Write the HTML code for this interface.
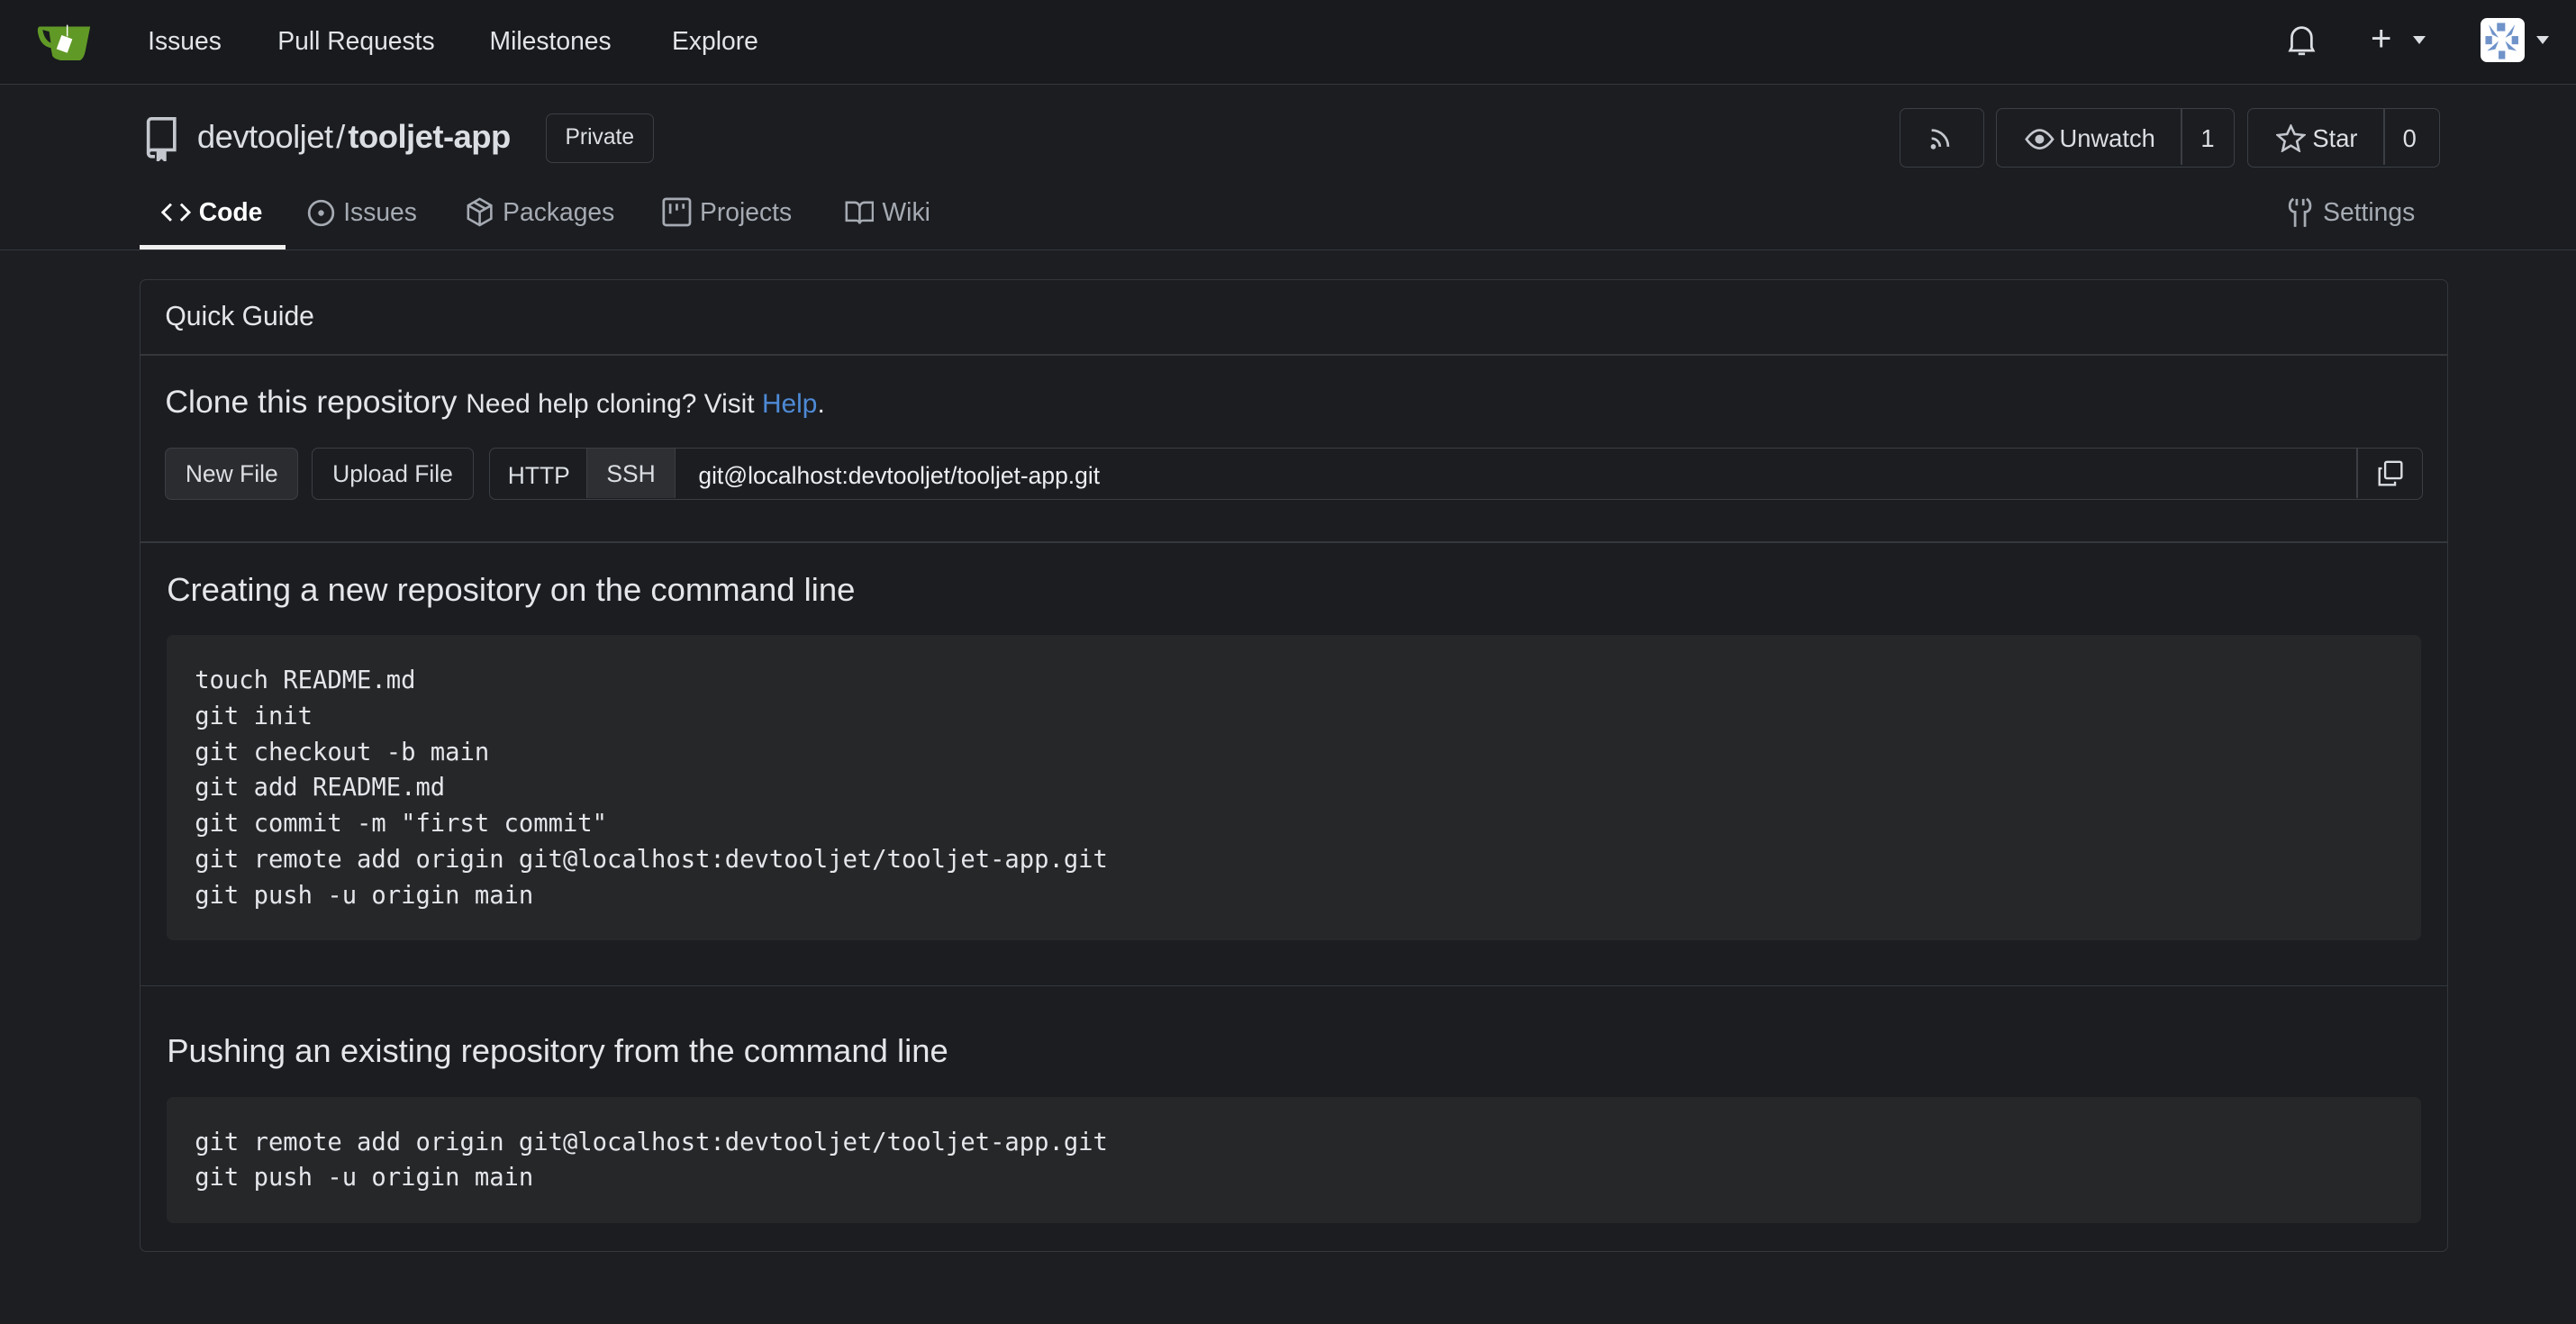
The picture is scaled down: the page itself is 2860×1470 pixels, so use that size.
<!DOCTYPE html>
<html><head><meta charset="utf-8">
<style>
html{zoom:1.824;}
body{margin:0;width:1568px;height:806px;background:#1c1e22;font-family:"Liberation Sans",sans-serif;color:#dbdee2;overflow:hidden;position:relative;font-size:15px}
.abs{position:absolute}
.nav{position:absolute;left:0;top:0;width:1568px;height:51px;background:#181a1e;border-bottom:1px solid #34373c}
.nav a{position:absolute;top:16px;font-size:15.5px;color:#e2e4e8}
.hdr{position:absolute;left:0;top:52px;width:1568px;height:100px;background:#1b1d21;border-bottom:1px solid #34373c}
.btn{position:absolute;border:1px solid #3b3e44;border-radius:4px;box-sizing:border-box;background:#1b1d21;color:#dbdee2}
.tab{position:absolute;top:120px;font-size:15.5px;color:#a6abb3}
.box{position:absolute;left:85px;top:170px;width:1405px;height:592px;border:1px solid #34373c;border-radius:4px;box-sizing:border-box;background:#1b1d21}
.code{position:absolute;left:16px;width:1372px;background:#262729;border-radius:4px;font-family:"DejaVu Sans Mono","Liberation Mono",monospace;font-size:14.9px;line-height:21.8px;color:#e4e6ea;padding:17px 17px;box-sizing:border-box;white-space:pre}
h3{position:absolute;margin:0;font-weight:normal;font-size:20px;color:#e4e6ea;left:16px}
.sep{position:absolute;left:0;width:100%;height:1px;background:#34373c}
</style></head><body>
<div class="nav">
 <svg class="abs" style="left:22px;top:13px" width="34" height="24" viewBox="0 0 34 24"><path d="M2 3 Q0 4 2 10 Q4 15 9 16 L10 21 Q12 24 20 24 L26 24 Q29 23 30 18 L33 3 Z" fill="#609926"/><path d="M4 5 Q5 11 9 13 L8 6 Z" fill="#181a1e"/><rect x="14" y="9" width="7" height="9" transform="rotate(20 17 13)" fill="#fff"/><line x1="19" y1="2" x2="19" y2="9" stroke="#fff" stroke-width="0.8"/></svg>
 <a style="left:90px">Issues</a><a style="left:169px">Pull Requests</a><a style="left:298px">Milestones</a><a style="left:409px">Explore</a>
 <svg class="abs" style="left:1392px;top:15px" width="18" height="20" viewBox="0 0 18 20" fill="none" stroke="#dbdee2" stroke-width="1.5"><path d="M3 14 V8 a6 6 0 0 1 12 0 V14 L16 16 H2 Z"/><path d="M7 18 h4"/></svg>
 <div class="abs" style="left:1443px;top:11px;font-size:22px;color:#dbdee2">+</div>
 <div class="abs" style="left:1469px;top:22px;border:4px solid transparent;border-top:5px solid #dbdee2"></div>
 <div class="abs" style="left:1510px;top:11px;width:27px;height:27px;background:#fff;border-radius:4px"><svg width="27" height="27" viewBox="0 0 27 27" fill="#6f92c9"><rect x="10" y="3" width="5" height="5"/><rect x="3" y="11" width="4" height="5"/><rect x="19" y="11" width="4" height="5"/><rect x="11" y="20" width="4" height="5"/><path d="M5 4 L11 12 L7 10Z M21 4 L15 12 L19 10Z M4 20 L11 14 L9 19Z M22 20 L15 14 L17 19Z"/></svg></div>
 <div class="abs" style="left:1544px;top:22px;border:4px solid transparent;border-top:5px solid #dbdee2"></div>
</div>
<div class="hdr"></div>
<svg class="abs" style="left:88px;top:71px" width="20" height="27" viewBox="0 0 20 27" fill="none" stroke="#c4c8ce" stroke-width="2"><path d="M2 22 V3 a2 2 0 0 1 2 -2 H18 V20 H4 a2 2 0 0 0 -2 2 a2 2 0 0 0 2 2 H6"/><path d="M8 20 V26 L10 24 L12 26 V20" fill="#c4c8ce"/></svg>
<div class="abs" style="left:120px;top:72px;font-size:20px;color:#dbdee2;letter-spacing:-0.3px">devtooljet<span style="margin:0 2px">/</span><b>tooljet-app</b></div>
<div class="btn" style="left:332px;top:69px;width:66px;height:30px;font-size:13.5px;text-align:center;line-height:28px">Private</div>
<div class="btn" style="left:1156px;top:66px;width:52px;height:36px"><svg style="margin:11px 0 0 17px" width="16" height="14" viewBox="0 0 16 14" fill="none" stroke="#c4c8ce" stroke-width="1.5"><circle cx="3" cy="12" r="0.8" fill="#c4c8ce"/><path d="M2 7 a5 5 0 0 1 5 5"/><path d="M2 2 a10 10 0 0 1 10 10"/></svg></div>
<div class="btn" style="left:1215px;top:66px;width:145px;height:36px;font-size:15px"><svg class="abs" style="left:17px;top:10px" width="18" height="16" viewBox="0 0 18 16" fill="none" stroke="#c4c8ce" stroke-width="1.5"><path d="M1 8 Q9 -3 17 8 Q9 19 1 8Z"/><circle cx="9" cy="8" r="2" fill="#c4c8ce"/></svg><span class="abs" style="left:38px;top:9px">Unwatch</span><div class="abs" style="left:112px;top:0;width:1px;height:34px;background:#3b3e44"></div><span class="abs" style="left:124px;top:9px">1</span></div>
<div class="btn" style="left:1368px;top:66px;width:117px;height:36px;font-size:15px"><svg class="abs" style="left:17px;top:9px" width="18" height="17" viewBox="0 0 18 17" fill="none" stroke="#c4c8ce" stroke-width="1.4"><path d="M9 1 L11.3 6 L17 6.6 L12.7 10.3 L14 16 L9 13 L4 16 L5.3 10.3 L1 6.6 L6.7 6Z"/></svg><span class="abs" style="left:39px;top:9px">Star</span><div class="abs" style="left:82px;top:0;width:1px;height:34px;background:#3b3e44"></div><span class="abs" style="left:94px;top:9px">0</span></div>
<svg class="abs" style="left:98px;top:122px" width="18" height="14" viewBox="0 0 18 14" fill="none" stroke="#fff" stroke-width="1.6"><path d="M6 2 L1 7 L6 12 M12 2 L17 7 L12 12"/></svg>
<div class="tab" style="left:121px;color:#fff;font-weight:bold">Code</div>
<div class="abs" style="left:85px;top:149px;width:89px;height:3px;background:#f0f0f0"></div>
<svg class="abs" style="left:187px;top:121px" width="17" height="17" viewBox="0 0 17 17" fill="none" stroke="#a6abb3" stroke-width="1.5"><circle cx="8.5" cy="8.5" r="7.3"/><circle cx="8.5" cy="8.5" r="1" fill="#a6abb3"/></svg>
<div class="tab" style="left:209px">Issues</div>
<svg class="abs" style="left:284px;top:120px" width="16" height="18" viewBox="0 0 16 18" fill="none" stroke="#a6abb3" stroke-width="1.4"><path d="M8 1 L15 5 V13 L8 17 L1 13 V5Z M1 5 L8 9 L15 5 M8 9 V17 M4.5 3 L11.5 7"/></svg>
<div class="tab" style="left:306px">Packages</div>
<svg class="abs" style="left:403px;top:120px" width="18" height="18" viewBox="0 0 18 18" fill="none" stroke="#a6abb3" stroke-width="1.5"><rect x="1" y="1" width="16" height="16" rx="1.5"/><path d="M5 4 V10 M9 4 V8 M13 4 V7"/></svg>
<div class="tab" style="left:426px">Projects</div>
<svg class="abs" style="left:514px;top:122px" width="18" height="15" viewBox="0 0 18 15" fill="none" stroke="#a6abb3" stroke-width="1.4"><path d="M1 1 H6 a3 3 0 0 1 3 3 V14 a2 2 0 0 0 -2 -2 H1Z M17 1 H12 a3 3 0 0 0 -3 3 V14 a2 2 0 0 1 2 -2 H17Z"/></svg>
<div class="tab" style="left:537px">Wiki</div>
<svg class="abs" style="left:1392px;top:120px" width="16" height="19" viewBox="0 0 16 19" fill="none" stroke="#a6abb3" stroke-width="1.5"><path d="M4 1 Q1 3 2 7 Q3 9 5 9 V18 M12 1 Q15 3 14 7 Q13 9 11 9 V18 M6 1 V5 M10 1 V5"/></svg>
<div class="tab" style="left:1414px">Settings</div>

<div class="box">
 <div class="abs" style="left:15px;top:13px;font-size:16.5px;color:#e4e6ea">Quick Guide</div>
 <div class="sep" style="top:45px"></div>
 <div class="abs" style="left:15px;top:63px;font-size:19.5px;color:#e4e6ea">Clone this repository <span style="font-size:16.4px">Need help cloning? Visit <span style="color:#4e8ad6">Help</span>.</span></div>
 <div class="btn" style="left:15px;top:102px;width:81px;height:32px;background:#2a2c30;font-size:14.5px;text-align:center;line-height:31px">New File</div>
 <div class="btn" style="left:104px;top:102px;width:99px;height:32px;font-size:14.5px;text-align:center;line-height:31px">Upload File</div>
 <div class="btn" style="left:212px;top:102px;width:1177px;height:32px;font-size:14.5px;background:#1b1d21">
  <span class="abs" style="left:11px;top:8px">HTTP</span>
  <div class="abs" style="left:59px;top:0;width:54px;height:30px;background:#2d2f33;border-left:1px solid #3b3e44;border-right:1px solid #3b3e44;box-sizing:border-box;text-align:center;line-height:31px">SSH</div>
  <span class="abs" style="left:127px;top:8px;color:#eceef1">git@localhost:devtooljet/tooljet-app.git</span>
  <div class="abs" style="left:1136px;top:0;width:1px;height:30px;background:#3b3e44"></div>
  <svg class="abs" style="left:1149px;top:7px" width="16" height="16" viewBox="0 0 16 16" fill="none" stroke="#dbdee2" stroke-width="1.3"><rect x="5" y="1" width="10" height="10" rx="1"/><path d="M3 5 H1.5 V15 H11 V13"/></svg>
 </div>
 <div class="sep" style="top:159px"></div>
 <h3 style="top:177px">Creating a new repository on the command line</h3>
 <div class="code" style="top:216px;height:186px">touch README.md
git init
git checkout -b main
git add README.md
git commit -m "first commit"
git remote add origin git@localhost:devtooljet/tooljet-app.git
git push -u origin main</div>
 <div class="sep" style="top:429px"></div>
 <h3 style="top:458px">Pushing an existing repository from the command line</h3>
 <div class="code" style="top:497px;height:77px">git remote add origin git@localhost:devtooljet/tooljet-app.git
git push -u origin main</div>
</div>
</body></html>
